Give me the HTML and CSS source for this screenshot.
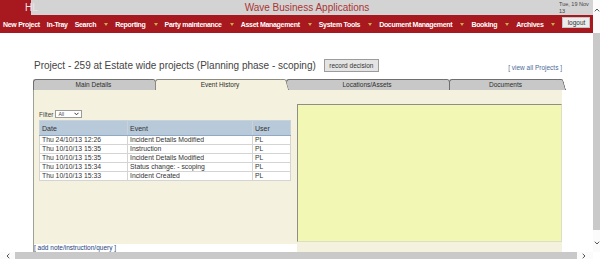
FILE: index.html
```html
<!DOCTYPE html>
<html lang="en">
<head>
<meta charset="utf-8">
<title>Wave Business Applications</title>
<link rel="stylesheet" href="styles.css">
</head>
<body>
<div class="frame">
  <div class="viewport">
    <header class="topbar">
      <div class="logo">HL</div>
      <div class="apptitle">Wave Business Applications</div>
      <div class="date">Tue, 19 Nov<br>13</div>
    </header>
    <nav class="menubar">
      <span class="menu-item">New Project</span>
      <span class="menu-item">In-Tray</span>
      <span class="menu-item">Search<i class="caret"></i></span>
      <span class="menu-item">Reporting<i class="caret"></i></span>
      <span class="menu-item">Party maintenance<i class="caret"></i></span>
      <span class="menu-item">Asset Management<i class="caret"></i></span>
      <span class="menu-item">System Tools<i class="caret"></i></span>
      <span class="menu-item">Document Management<i class="caret"></i></span>
      <span class="menu-item">Booking<i class="caret"></i></span>
      <span class="menu-item">Archives<i class="caret"></i></span>
      <button class="logout">logout</button>
    </nav>
    <main class="content">
      <div class="titlerow">
        <h1>Project - 259 at Estate wide projects (Planning phase - scoping)</h1>
        <button class="record">record decision</button>
        <a class="viewall" href="#">[ view all Projects ]</a>
      </div>
      <div class="tabs">
        <div class="tab">Main Details</div>
        <div class="tab active">Event History</div>
        <div class="tab">Locations/Assets</div>
        <div class="tab">Documents</div>
      </div>
      <div class="panel">
        <div class="left">
          <div class="leftbody">
            <div class="filter">
              <span>Filter</span>
              <span class="select">All<svg width="5" height="4" viewBox="0 0 5 4"><polyline points="0.5,0.8 2.5,2.8 4.5,0.8" fill="none" stroke="#333" stroke-width="1"/></svg></span>
            </div>
            <table class="events">
              <thead>
                <tr><th class="c-date">Date</th><th class="c-event">Event</th><th class="c-user">User</th></tr>
              </thead>
              <tbody>
                <tr><td>Thu 24/10/13 12:26</td><td>Incident Details Modified</td><td>PL</td></tr>
                <tr><td>Thu 10/10/13 15:35</td><td>Instruction</td><td>PL</td></tr>
                <tr><td>Thu 10/10/13 15:35</td><td>Incident Details Modified</td><td>PL</td></tr>
                <tr><td>Thu 10/10/13 15:34</td><td>Status change: - scoping</td><td>PL</td></tr>
                <tr><td>Thu 10/10/13 15:33</td><td>Incident Created</td><td>PL</td></tr>
              </tbody>
            </table>
          </div>
          <a class="addnote" href="#">[ add note/instruction/query ]</a>
        </div>
        <div class="right">
          <div class="yellow"></div>
        </div>
      </div>
    </main>
  </div>
  <div class="vscroll">
    <div class="sb-up"><svg width="6" height="4" viewBox="0 0 6 4"><polyline points="0.8,3.3 3,1 5.2,3.3" fill="none" stroke="#555" stroke-width="1"/></svg></div>
    <div class="sb-vthumb"></div>
    <div class="sb-down"><svg width="6" height="4" viewBox="0 0 6 4"><polyline points="0.8,0.7 3,3 5.2,0.7" fill="none" stroke="#555" stroke-width="1"/></svg></div>
  </div>
  <div class="hscroll">
    <div class="sb-left"><svg width="4" height="6" viewBox="0 0 4 6"><polyline points="3.3,0.8 1,3 3.3,5.2" fill="none" stroke="#555" stroke-width="1"/></svg></div>
    <div class="sb-hthumb"></div>
    <div class="sb-right"><svg width="4" height="6" viewBox="0 0 4 6"><polyline points="0.7,0.8 3,3 0.7,5.2" fill="none" stroke="#555" stroke-width="1"/></svg></div>
  </div>
  <div class="corner"></div>
</div>
</body>
</html>
```
FILE: styles.css
```css
* { box-sizing: border-box; }
html, body { margin: 0; padding: 0; }
body {
  width: 600px;
  height: 259px;
  overflow: hidden;
  background: #fff;
  font-family: "Liberation Sans", Arial, sans-serif;
  color: #333;
}
.frame {
  display: grid;
  grid-template-columns: 593px 7px;
  grid-template-rows: 252px 7px;
  width: 600px;
  height: 259px;
}
.viewport {
  overflow: hidden;
  display: flex;
  flex-direction: column;
}

/* top bar */
.topbar {
  height: 15px;
  flex: none;
  display: flex;
  background: #d3d3d3;
}
.logo {
  width: 31px;
  flex: none;
  background: #a7191f;
  color: #f3e2e2;
  font-size: 10px;
  line-height: 15px;
  padding-left: 25px;
  white-space: nowrap;
}
.apptitle {
  flex: 1;
  text-align: center;
  color: #ad3434;
  font-size: 10px;
  line-height: 15px;
  padding-left: 24px;
}
.date {
  width: 34px;
  flex: none;
  font-size: 5.5px;
  line-height: 7px;
  color: #444;
  padding-top: 1px;
}

/* menu bar */
.menubar {
  height: 18px;
  flex: none;
  display: flex;
  align-items: center;
  gap: 7px;
  padding-left: 3px;
  background: #a7191f;
  color: #fff;
  font-family: "Liberation Sans", Arial, sans-serif;
  font-weight: bold;
  font-size: 7px;
  letter-spacing: -0.3px;
}
.menu-item {
  flex: none;
  display: flex;
  align-items: center;
  white-space: nowrap;
}
.caret {
  display: block;
  width: 0;
  height: 0;
  margin-left: 8px;
  border-left: 2px solid transparent;
  border-right: 2px solid transparent;
  border-top: 3px solid #c8ad4c;
}
.logout {
  flex: none;
  align-self: flex-start;
  margin: 2px 5px 0 auto;
  width: 28px;
  height: 11px;
  padding: 0;
  background: #ececec;
  border: 1px solid #c4c4c4;
  font-family: "Liberation Sans", Arial, sans-serif;
  font-size: 6.5px;
  letter-spacing: 0;
  font-weight: normal;
  color: #333;
}

/* content */
.content {
  flex: 1;
  display: flex;
  flex-direction: column;
  padding: 26px 31px 0 33px;
}
.titlerow {
  height: 13px;
  flex: none;
  display: flex;
  align-items: center;
}
.titlerow h1 {
  margin: 0 0 0 1px;
  font-size: 10px;
  font-weight: normal;
  color: #444;
  white-space: nowrap;
}
.record {
  margin-left: 8px;
  width: 55px;
  height: 13px;
  padding: 0;
  background: #e4e4e4;
  border: 1px solid #9c9c9c;
  font-family: "Liberation Sans", Arial, sans-serif;
  font-size: 6.5px;
  color: #333;
}
.viewall {
  margin-left: auto;
  margin-top: 3px;
  font-size: 6.5px;
  color: #4b6a98;
  text-decoration: none;
  white-space: nowrap;
}

/* tabs */
.tabs {
  flex: none;
  margin-top: 7px;
  height: 11px;
  display: grid;
  grid-template-columns: 120px 129px 161px 112px;
  column-gap: 2px;
}
.tab {
  position: relative;
  background: #c8c8c8;
  border-top: 1px solid #6f6f6f;
  border-left: 1px solid #6f6f6f;
  border-top-left-radius: 3px;
  font-size: 6.5px;
  line-height: 10px;
  text-align: center;
  color: #2d2d2d;
}
.tab::after {
  content: "";
  position: absolute;
  top: -1px;
  bottom: 0;
  right: -2px;
  width: 5px;
  background: inherit;
  border-top: 1px solid #6f6f6f;
  border-right: 1px solid #6f6f6f;
  border-top-right-radius: 2px;
  transform: skewX(16deg);
  transform-origin: top;
}
.tab.active {
  background: #f4f2de;
  border-color: #8a8a80;
  z-index: 1;
}
.tab.active::after { border-color: #8a8a80; }

/* panel */
.panel {
  flex: 1;
  display: flex;
  background: #f4f2de;
  border-left: 1px solid #a0a095;
}
.left {
  width: 263px;
  flex: none;
  display: flex;
  flex-direction: column;
}
.leftbody {
  flex: 1;
  padding: 20px 0 0 5px;
}
.filter {
  display: flex;
  align-items: center;
  gap: 2px;
  height: 8px;
  font-size: 6.5px;
  color: #444;
}
.select {
  width: 27px;
  height: 8px;
  display: flex;
  align-items: center;
  justify-content: space-between;
  padding: 0 2px 0 2px;
  background: #fff;
  border: 1px solid #9a9a9a;
  font-size: 5px;
}
.events {
  margin-top: 2px;
  width: 251px;
  border-collapse: collapse;
  table-layout: fixed;
  font-size: 6.8px;
  color: #333;
}
.c-date { width: 88px; }
.c-event { width: 125px; }
.c-user { width: 38px; }
.events th {
  height: 15px;
  padding: 0 0 0 2px;
  text-align: left;
  font-weight: normal;
  font-size: 7px;
  background: #b8c9da;
  border: 1px solid #c9d2da;
  border-bottom: 1px solid #8eaac6;
}
.events td {
  height: 9px;
  padding: 0 0 0 2px;
  line-height: 8px;
  background: #fff;
  border: 1px solid #d4d4d4;
  white-space: nowrap;
}
.addnote {
  height: 8px;
  flex: none;
  background: #fff;
  font-size: 6.5px;
  line-height: 8px;
  color: #23427a;
  text-decoration: none;
  white-space: nowrap;
}
.right {
  flex: 1;
  padding: 14px 0 10px 0;
}
.yellow {
  height: 100%;
  background: #f2f7b3;
  border: 1px solid;
  border-color: #8e8e86 #dcdfc4 #dcdfc4 #8e8e86;
}

/* scrollbars */
.vscroll {
  display: flex;
  flex-direction: column;
  background: #fbfbfb;
}
.sb-up {
  height: 33px;
  flex: none;
  display: flex;
  justify-content: center;
  padding-top: 8px;
}
.sb-vthumb {
  height: 197px;
  flex: none;
  background: #c9c9c9;
}
.sb-down {
  flex: 1;
  display: flex;
  justify-content: center;
  align-items: flex-end;
  padding-bottom: 7px;
}
.hscroll {
  display: flex;
  align-items: stretch;
  background: #fbfbfb;
}
.sb-left {
  width: 15px;
  flex: none;
  display: flex;
  align-items: center;
  padding-left: 6px;
}
.sb-hthumb {
  width: 562px;
  flex: none;
  background: #c9c9c9;
}
.sb-right {
  flex: 1;
  display: flex;
  align-items: center;
  padding-left: 5px;
}
.corner { background: #fff; }
```
